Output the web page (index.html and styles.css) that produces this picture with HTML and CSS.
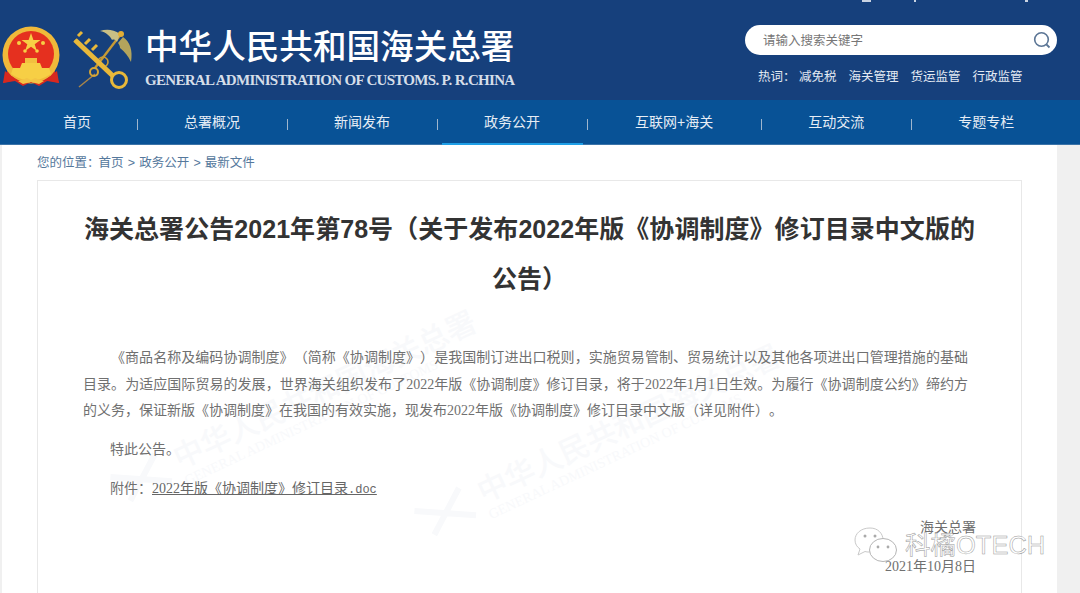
FILE: index.html
```html
<!DOCTYPE html>
<html lang="zh-CN">
<head>
    <meta charset="UTF-8">
    <title>海关总署公告2021年第78号</title>
    <link rel="stylesheet" href="styles.css">
</head>
<body>
    <div class="page">
        <header class="top">
            <i class="tick tick-1"></i>
            <i class="tick tick-2"></i>
            <i class="tick tick-3"></i>
            <div class="logo">
                <svg class="emblem" viewBox="0 0 60 64" width="60" height="64">
                    <path d="M7 44 L2 58 L14 55 L22 60 L30 56 L38 60 L46 55 L58 58 L53 44 Z" fill="#d8281f"/>
                    <circle cx="30" cy="30" r="28.500" fill="#f0b93a"/>
                    <circle cx="30" cy="29" r="23" fill="#e5301f"/>
                    <path d="M30 8 L32.400 15 L39.500 15 L33.700 19.200 L35.900 26 L30 21.800 L24.100 26 L26.300 19.200 L20.500 15 L27.600 15 Z" fill="#f7cf45"/>
                    <circle cx="18" cy="18" r="2" fill="#f7cf45"/>
                    <circle cx="42" cy="18" r="2" fill="#f7cf45"/>
                    <circle cx="24" cy="26" r="1.800" fill="#f7cf45"/>
                    <circle cx="36" cy="26" r="1.800" fill="#f7cf45"/>
                    <path d="M21 38 H39 L41 43 H48 L50 49 Q30 62 10 49 L12 43 H19 Z" fill="#f7cf45"/>
                    <path d="M24 33 H36 V38 H24 Z" fill="#f2c040"/>
                    <path d="M4 46 Q30 70 56 46 L58 58 L46 56 L38 61 L30 57 L22 61 L14 56 L2 58 Z" fill="#d8281f"/>
                    <path d="M17 56 L26 53 L30 55 L34 53 L43 56 L38 59 L30 57 L22 59 Z" fill="#f3c445"/>
                </svg>
                <svg class="customs-key" viewBox="0 0 60 62" width="60" height="62">
                    <path d="M22 46 L6 59" stroke="#a8854a" stroke-width="1.500"/>
                    <path d="M48 6 L22 40" stroke="#c79a35" stroke-width="2.400"/>
                    <path d="M47 6 C40 1 33 1 27 3 C33 4 37 8 39 12 C41 11 43 12 44 14 Z" fill="#c9bf85"/>
                    <path d="M50 9 C57 14 60 22 58 34 C55 28 52 24 47 20 C47 18 46 16 45 15 Z" fill="#b3a45c"/>
                    <circle cx="48" cy="6" r="3" fill="#e2ae36"/>
                    <circle cx="21" cy="44" r="4" fill="none" stroke="#d6a636" stroke-width="2"/>
                    <circle cx="30" cy="34" r="5" fill="none" stroke="#c99c36" stroke-width="1.600"/>
                    <path d="M2 12 L40 48" stroke="#e8b83a" stroke-width="5"/>
                    <path d="M5 8 L9 4 M12 16 L17 11 M19 22 L24 17 M2 12 L6 16 M9 19 L12 22 M16 25 L19 28" stroke="#e8b83a" stroke-width="3"/>
                    <circle cx="46" cy="52" r="7.500" fill="none" stroke="#e8b83a" stroke-width="3"/>
                </svg>
                <div class="logo-text">
                    <div class="logo-cn">中华人民共和国海关总署</div>
                    <div class="logo-en">GENERAL ADMINISTRATION OF CUSTOMS. P. R.CHINA</div>
                </div>
            </div>
            <div class="top-right">
                <div class="search">
                    <span class="search-hint">请输入搜索关键字</span>
                    <svg viewBox="0 0 18 18" width="18" height="18">
                        <circle cx="8.500" cy="8.500" r="6.800" fill="none" stroke="#5b7595" stroke-width="1.600"/>
                        <path d="M13.500 13.500 L16.500 16.500" stroke="#5b7595" stroke-width="1.800"/>
                    </svg>
                </div>
                <div class="hot">
                    <span class="hot-label">热词：</span>
                    <a>减免税</a>
                    <a>海关管理</a>
                    <a>货运监管</a>
                    <a>行政监管</a>
                </div>
            </div>
        </header>

        <nav class="nav">
            <a class="nav-item first">首页</a>
            <a class="nav-item">总署概况</a>
            <a class="nav-item">新闻发布</a>
            <a class="nav-item active">政务公开</a>
            <a class="nav-item wide">互联网+海关</a>
            <a class="nav-item">互动交流</a>
            <a class="nav-item last">专题专栏</a>
        </nav>

        <main class="main">
            <div class="crumb">您的位置：<a>首页</a> &gt; <a>政务公开</a> &gt; <a>最新文件</a></div>
            <article class="card">
                <div class="wm wm-1">
                    <svg viewBox="0 0 60 40" width="60" height="40"><path d="M2 6 L56 36 M10 36 L52 4" stroke="#f8f9fb" stroke-width="6"/></svg>
                    中华人民共和国海关总署<small>GENERAL ADMINISTRATION OF CUSTOMS</small>
                </div>
                <div class="wm wm-2">
                    <svg viewBox="0 0 60 40" width="60" height="40"><path d="M2 6 L56 36 M10 36 L52 4" stroke="#f8f9fb" stroke-width="6"/></svg>
                    中华人民共和国海关总署<small>GENERAL ADMINISTRATION OF CUSTOMS</small>
                </div>
                <h1>海关总署公告2021年第78号（关于发布2022年版《协调制度》修订目录中文版的公告）</h1>
                <div class="content">
                    <p class="lead">《商品名称及编码协调制度》（简称《协调制度》）是我国制订进出口税则，实施贸易管制、贸易统计以及其他各项进出口管理措施的基础目录。为适应国际贸易的发展，世界海关组织发布了2022年版《协调制度》修订目录，将于2022年1月1日生效。为履行《协调制度公约》缔约方的义务，保证新版《协调制度》在我国的有效实施，现发布2022年版《协调制度》修订目录中文版（详见附件）。</p>
                    <p class="para">特此公告。</p>
                    <p class="para">附件：<a class="file">2022年版《协调制度》修订目录<span class="ext">.doc</span></a></p>
                    <div class="sign">
                        <div>海关总署</div>
                        <div class="sign-date">2021年10月8日</div>
                    </div>
                </div>
            </article>
        </main>

        <div class="mark">
            <svg viewBox="0 0 44 36" width="44" height="36">
                <path d="M16 1 C7 1 1 6.500 1 13 C1 17 3 20 6 22 L4 28 L11 24.500 C12 25 14 25 15 25 C22 25 29 20 29 13 C29 6.500 24 1 16 1 Z" fill="#fff" stroke="#c9c9c9"/>
                <ellipse cx="29" cy="23" rx="13.500" ry="11.500" fill="#fff" stroke="#b5b5b5"/>
                <circle cx="11" cy="9" r="1.500" fill="#aaa"/>
                <circle cx="21" cy="9" r="1.500" fill="#aaa"/>
                <circle cx="24" cy="20" r="1.400" fill="#aaa"/>
                <circle cx="34" cy="20" r="1.400" fill="#aaa"/>
            </svg>
            <span class="mark-text">科橘OTECH</span>
        </div>
    </div>
</body>
</html>
```

FILE: styles.css
```css
* {
    box-sizing: border-box;
}

html, body {
    margin: 0;
    height: 100%;
    overflow: hidden;
}

body {
    font-family: "Liberation Sans", "Noto Sans CJK SC", sans-serif;
    background: #f0f0f0;
    text-spacing-trim: space-all;
}

.page {
    position: relative;
    height: 593px;
    overflow: hidden;
}

.top {
    position: relative;
    display: flex;
    justify-content: space-between;
    height: 100px;
    background: #16407c;
}

.tick {
    position: absolute;
    top: 0;
    height: 2px;
    background: #c9d3e2;
}

.tick-1 { left: 862px; width: 9px; }
.tick-2 { left: 914px; width: 2px; }
.tick-3 { left: 1025px; width: 3px; }

.logo {
    display: flex;
    padding: 25px 0 0 1px;
}

.emblem {
    flex: none;
}

.customs-key {
    flex: none;
    margin: 3px 0 0 12px;
}

.logo-text {
    margin: 0 0 0 12px;
    color: #fff;
}

.logo-cn {
    width: 372px;
    font-family: "Noto Sans CJK SC", sans-serif;
    font-size: 33.600px;
    font-weight: 500;
    line-height: 40px;
    white-space: nowrap;
}

.logo-en {
    margin-top: 7px;
    font-family: "Liberation Serif", serif;
    font-size: 15px;
    font-weight: 700;
    letter-spacing: -0.700px;
    white-space: nowrap;
    color: #d5dee9;
}

.top-right {
    width: 335px;
    padding: 25px 23px 0 0;
}

.search {
    display: flex;
    align-items: center;
    justify-content: space-between;
    height: 30px;
    padding: 0 6px 0 18px;
    background: #fff;
    border-radius: 15px;
}

.search-hint {
    margin: -2px 0 0 0;
    font-size: 12.500px;
    color: #777;
}

.hot {
    display: flex;
    gap: 12px;
    margin-top: 13px;
    padding-left: 13px;
    font-size: 12.500px;
    line-height: 19px;
    color: #e3eaf3;
}

.hot-label {
    margin-right: -8.500px;
}

.nav {
    display: flex;
    height: 45px;
    padding-left: 15px;
    background: #085296;
    border-bottom: 1px solid #3b73a8;
}

.nav-item {
    position: relative;
    padding: 0 47px;
    font-size: 14px;
    line-height: 44px;
    color: #e6edf5;
    white-space: nowrap;
}

.nav-item.first {
    padding: 0 46px 0 48px;
}

.nav-item.wide {
    padding: 0 48px;
}

.nav-item::after {
    content: "";
    position: absolute;
    right: -1px;
    top: 19px;
    width: 1px;
    height: 11px;
    background: #9fb6ce;
}

.nav-item.last::after {
    display: none;
}

.nav-item.active::before {
    content: "";
    position: absolute;
    left: 5px;
    right: 4px;
    bottom: -1px;
    height: 2px;
    background: #1f9fe6;
}

.main {
    height: 448px;
    margin: 0 23px 0 2px;
    padding: 0 35px;
    background: #fff;
    overflow: hidden;
}

.crumb {
    height: 35px;
    padding-top: 2px;
    font-size: 12.500px;
    line-height: 33px;
    color: #55789c;
    word-spacing: 0.700px;
    white-space: nowrap;
}

.crumb a:first-child {
    margin-left: -1px;
}

.card {
    position: relative;
    height: 413px;
    padding: 23px 45px 0 45px;
    background: #fff;
    border: 1px solid #e8e8e8;
    border-bottom: 0;
    overflow: hidden;
}

h1 {
    position: relative;
    margin: 0;
    font-size: 25px;
    font-weight: 700;
    letter-spacing: 0.050px;
    line-height: 50px;
    text-align: center;
    color: #333;
}

.content {
    position: relative;
    margin-top: 41px;
    font-family: "Liberation Serif", "Noto Sans CJK SC", serif;
    font-size: 14px;
    line-height: 26.600px;
    color: #707070;
}

.content p {
    margin: 0;
}

.lead {
    margin-right: 8px !important;
    text-indent: 2em;
    text-align: justify;
}

.para {
    margin-top: 12.500px !important;
    padding-left: 27px;
}

.file {
    color: #666;
    text-decoration: underline;
}

.ext {
    font-family: "Liberation Mono", monospace;
    font-size: 12px;
}

.sign {
    margin-top: 11px;
    text-align: right;
}

.sign-date {
    margin-top: 12.500px;
}

.wm {
    position: absolute;
    font-family: "Noto Sans CJK SC", sans-serif;
    font-size: 30px;
    font-weight: 500;
    line-height: 38px;
    color: #f8f9fb;
    white-space: nowrap;
    transform: rotate(-25deg);
    transform-origin: left top;
}

.wm svg {
    position: absolute;
    left: -68px;
    top: 4px;
}

.wm small {
    display: block;
    font-family: "Liberation Serif", serif;
    font-size: 14px;
    line-height: 16px;
}

.wm-1 {
    left: 128px;
    top: 259px;
}

.wm-2 {
    left: 432px;
    top: 293px;
}

.mark {
    position: absolute;
    left: 854px;
    top: 527px;
    display: flex;
    align-items: center;
    gap: 7px;
}

.mark-text {
    font-family: "Liberation Sans", "Noto Sans CJK SC", sans-serif;
    font-size: 25.500px;
    line-height: 36px;
    color: rgba(255, 255, 255, 0.6);
    -webkit-text-stroke: 0.5px #999;
    white-space: nowrap;
}
```
